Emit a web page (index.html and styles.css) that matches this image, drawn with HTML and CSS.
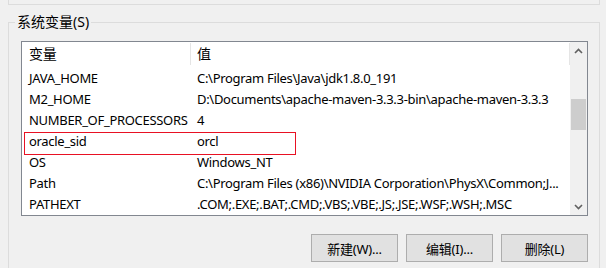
FILE: index.html
```html
<!DOCTYPE html>
<html lang="zh-CN">

<head>
    <meta charset="UTF-8">
    <title>环境变量</title>
    <link rel="stylesheet" href="styles.css">
</head>

<body>
    <div class="prev-group"></div>

    <fieldset class="group">
        <legend>系统变量(S)</legend>

        <div class="list">
            <div class="list-main">
                <div class="head">
                    <div class="col-name">变量</div>
                    <div class="col-value">值</div>
                </div>
                <div class="row">
                    <div class="col-name">JAVA_HOME</div>
                    <div class="col-value">C:\Program Files\Java\jdk1.8.0_191</div>
                </div>
                <div class="row">
                    <div class="col-name">M2_HOME</div>
                    <div class="col-value">D:\Documents\apache-maven-3.3.3-bin\apache-maven-3.3.3</div>
                </div>
                <div class="row">
                    <div class="col-name">NUMBER_OF_PROCESSORS</div>
                    <div class="col-value">4</div>
                </div>
                <div class="row marked">
                    <div class="col-name">oracle_sid</div>
                    <div class="col-value">orcl</div>
                </div>
                <div class="row">
                    <div class="col-name">OS</div>
                    <div class="col-value">Windows_NT</div>
                </div>
                <div class="row">
                    <div class="col-name">Path</div>
                    <div class="col-value">C:\Program Files (x86)\NVIDIA Corporation\PhysX\Common;J...</div>
                </div>
                <div class="row">
                    <div class="col-name">PATHEXT</div>
                    <div class="col-value">.COM;.EXE;.BAT;.CMD;.VBS;.VBE;.JS;.JSE;.WSF;.WSH;.MSC</div>
                </div>
            </div>

            <div class="scrollbar">
                <div class="arrow">
                    <svg width="9" height="6" viewBox="0 0 9 6"><path d="M1 5 L4.5 1.5 L8 5" fill="none" stroke="#606060" stroke-width="1.6"/></svg>
                </div>
                <div class="track">
                    <div class="thumb"></div>
                </div>
                <div class="arrow">
                    <svg width="9" height="6" viewBox="0 0 9 6"><path d="M1 1 L4.5 4.5 L8 1" fill="none" stroke="#606060" stroke-width="1.6"/></svg>
                </div>
            </div>
        </div>

        <div class="buttons">
            <button class="btn">新建(W)...</button>
            <button class="btn">编辑(I)...</button>
            <button class="btn">删除(L)</button>
        </div>
    </fieldset>
</body>

</html>
```

FILE: styles.css
```css
* {
    padding: 0;
    margin: 0;
    box-sizing: border-box;
}

body {
    width: 606px;
    height: 268px;
    overflow: hidden;
    background-color: #f0f0f0;
    font-family: "Noto Sans", "Noto Sans CJK SC", sans-serif;
    font-size: 13px;
    letter-spacing: -0.3px;
    color: #000;
}

/* 上一个分组框的底边 */
.prev-group {
    width: 592px;
    height: 5px;
    margin-left: 8px;
    border: 1px solid #dcdcdc;
    border-top: none;
}

.group {
    width: 592px;
    min-width: 0;
    height: 256px;
    margin: 7px 0 0 8px;
    padding: 9px 11px 0 12px;
    border: 1px solid #dcdcdc;
    border-bottom: none;
}

.group legend {
    margin-left: -6px;
    padding: 0 2px;
    line-height: 20px;
    font-size: 14px;
    letter-spacing: 0;
}

.list {
    display: flex;
    height: 175px;
    border: 1px solid #828790;
    background-color: #fff;
}

.list-main {
    flex: 1;
    overflow: hidden;
}

.head {
    display: flex;
    height: 26px;
    padding-top: 1px;
}

.head .col-name,
.head .col-value {
    height: 22px;
    line-height: 22px;
    border-right: 1px solid #e5e5e5;
    font-size: 14px;
}

.head .col-value {
    flex: 1;
}

.row {
    display: flex;
    height: 21px;
    line-height: 21px;
    position: relative;
}

.col-name {
    flex-shrink: 0;
    width: 169px;
    padding-left: 7px;
    white-space: nowrap;
}

.col-value {
    padding-left: 6px;
    white-space: nowrap;
}

/* 红色标注框 */
.marked::after {
    content: "";
    position: absolute;
    left: 2px;
    top: 1px;
    width: 270px;
    height: 21px;
    border: 1px solid #e81123;
}

.scrollbar {
    width: 17px;
    display: flex;
    flex-direction: column;
    background-color: #f0f0f0;
}

.arrow {
    height: 17px;
    display: flex;
    align-items: center;
    justify-content: center;
}

.track {
    flex: 1;
    padding: 40px 1px 0 1px;
}

.thumb {
    height: 31px;
    background-color: #cdcdcd;
}

.buttons {
    display: flex;
    justify-content: flex-end;
    gap: 8px;
    margin-top: 18px;
}

.btn {
    width: 87px;
    height: 28px;
    border: 1px solid #adadad;
    background-color: #e1e1e1;
    font-family: "Noto Sans", "Noto Sans CJK SC", sans-serif;
    font-size: 13px;
    letter-spacing: -0.2px;
    color: #000;
}
```
